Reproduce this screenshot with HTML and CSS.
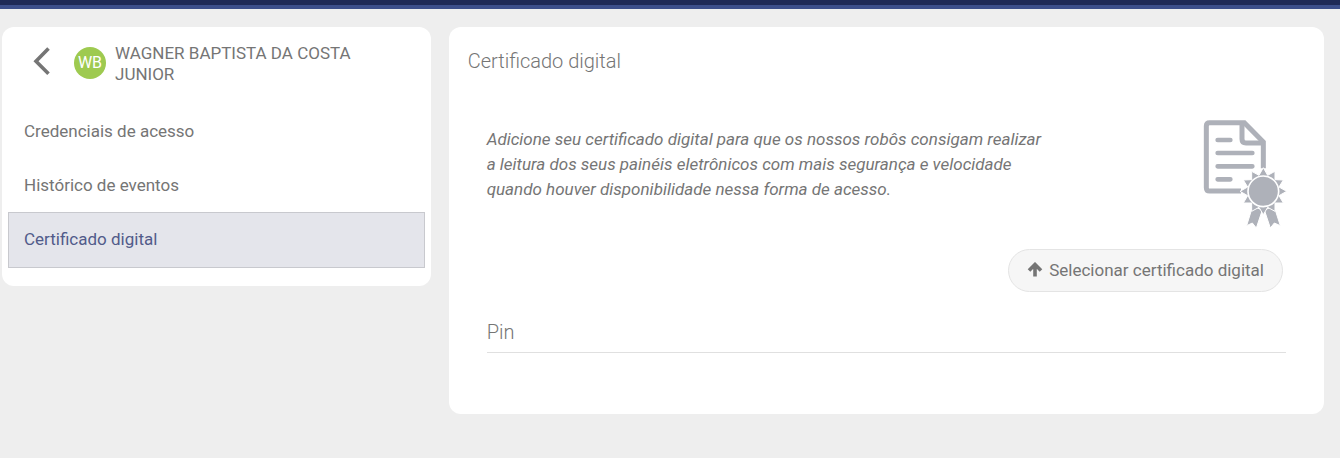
FILE: index.html
```html
<!DOCTYPE html>
<html lang="pt-BR">
<head>
    <meta charset="UTF-8">
    <meta name="viewport" content="width=device-width, initial-scale=1.0">
    <title>Certificado digital</title>
    <link rel="stylesheet" href="styles.css">
</head>
<body>
    <header class="topbar"></header>
    <div class="container">
        <aside class="card sidebar">
            <div class="perfil">
                <button type="button" class="voltar" aria-label="Voltar">
                    <svg width="18" height="28" viewBox="0 0 18 28">
                        <path d="M16.500 1.500L4 14.200l12.500 12.500" fill="none" stroke="#757575" stroke-width="3.600"/>
                    </svg>
                </button>
                <span class="avatar">WB</span>
                <span class="nome">WAGNER BAPTISTA DA COSTA JUNIOR</span>
            </div>
            <nav class="menu">
                <a href="#credenciais">Credenciais de acesso</a>
                <a href="#historico">Histórico de eventos</a>
                <a href="#certificado" class="ativo">Certificado digital</a>
            </nav>
        </aside>

        <main class="card conteudo">
            <h1>Certificado digital</h1>
            <form class="form-certificado">
                <div class="intro">
                    <p>Adicione seu certificado digital para que os nossos robôs consigam realizar a leitura dos seus painéis eletrônicos com mais segurança e velocidade quando houver disponibilidade nessa forma de acesso.</p>
                    <svg class="icone-certificado" width="83" height="108" viewBox="-2 0 249 324" aria-hidden="true">
                        <g fill="none" stroke="#aeb1b9" stroke-width="15">
                            <path d="M179 145V66L122 8H18Q8 8 8 18V203Q8 213 18 213H112"/>
                            <path d="M115 8V57Q115 69 127 69H179"/>
                            <path d="M42 60H80M42 99H146M42 139H146M42 178H80" stroke-linecap="round" stroke-width="14"/>
                        </g>
                        <g fill="#aeb1b9" stroke="#fff" stroke-width="3">
                            <path d="M147 258L176 270L158 324L146 309L129 317Z"/>
                            <path d="M211 258L182 270L200 324L212 309L230 317Z"/>
                            <path d="M179 143L192 166L214 154L214 179L239 180L226 201L249 214L226 227L239 249L214 249L214 274L192 262L179 284L166 262L144 274L144 249L119 249L132 227L109 214L132 201L119 180L144 179L144 154L166 166Z"/>
                            <circle cx="179" cy="214" r="46" stroke-width="5"/>
                        </g>
                    </svg>
                </div>
                <button type="button" class="btn-selecionar">
                    <svg width="16" height="16" viewBox="0 0 16 16" aria-hidden="true">
                        <path d="M2 8.500L8 2.500L14 8.500M8 3.500V14.500" fill="none" stroke="#757575" stroke-width="3.600"/>
                    </svg>
                    Selecionar certificado digital
                </button>
                <input type="password" id="pin" name="pin" placeholder="Pin" aria-label="Pin">
            </form>
        </main>
    </div>
</body>
</html>
```
FILE: styles.css
```css
* {
    box-sizing: border-box;
}
body {
    font-family: Roboto, sans-serif;
    font-size: 17px;
    color: #757575;
    background: #eee;
    margin: 0;
}
.topbar {
    height: 9px;
    background: #1f2a56;
    border-bottom: 4px solid #3d4f8a;
}
.container {
    display: grid;
    grid-template-columns: repeat(12, 1fr);
    gap: 18px;
    align-items: start;
    padding: 18px 16px 18px 2px;
}
.card {
    background: white;
    border-radius: 12px;
}
.sidebar {
    grid-column: span 4;
    padding: 16px 6px 18px;
}
.perfil {
    display: flex;
    align-items: flex-start;
    padding: 0 24px;
}
.voltar {
    display: flex;
    margin: 4px 24px 0 0;
    padding: 0;
    background: none;
    border: none;
    cursor: pointer;
}
.avatar {
    width: 32px;
    height: 32px;
    margin: 4px 9px 0 0;
    border-radius: 50%;
    background: #9eca50;
    color: white;
    font-size: 16px;
    line-height: 32px;
    text-align: center;
    flex-shrink: 0;
}
.nome {
    max-width: 260px;
    line-height: 21px;
}
.menu {
    margin-top: 20px;
}
.menu a {
    display: block;
    height: 54px;
    padding: 0 16px;
    line-height: 52px;
    color: #757575;
    text-decoration: none;
}
.menu a.ativo {
    height: 56px;
    margin-top: -1px;
    padding: 0 15px;
    background: #e4e5eb;
    border: 1px solid #c8c9ce;
    color: #515b8a;
}
.conteudo {
    grid-column: span 8;
    padding: 20px 38px 61px;
}
h1 {
    margin: 0 0 0 -19px;
    font-size: 20px;
    font-weight: 300;
    line-height: 28px;
}
.form-certificado {
    display: flex;
    flex-direction: column;
}
.intro {
    display: flex;
    justify-content: space-between;
    margin-top: 45px;
}
.intro p {
    max-width: 560px;
    margin: 7px 0 0;
    font-style: italic;
    line-height: 25px;
}
.icone-certificado {
    flex-shrink: 0;
    overflow: visible;
}
.btn-selecionar {
    display: flex;
    align-items: center;
    align-self: flex-end;
    gap: 6px;
    height: 43px;
    margin: 21px 3px 0 0;
    padding: 0 18px 2px;
    background: #f6f6f6;
    border: 1px solid #e4e4e4;
    border-radius: 22px;
    color: #757575;
    font: inherit;
    cursor: pointer;
}
#pin {
    width: 100%;
    height: 41px;
    margin-top: 20px;
    padding: 0;
    background: none;
    border: none;
    border-bottom: 1px solid #e0e0e0;
    color: #757575;
    font-family: inherit;
    font-size: 20px;
    font-weight: 300;
    outline: none;
}
#pin::placeholder {
    color: #757575;
}
```
